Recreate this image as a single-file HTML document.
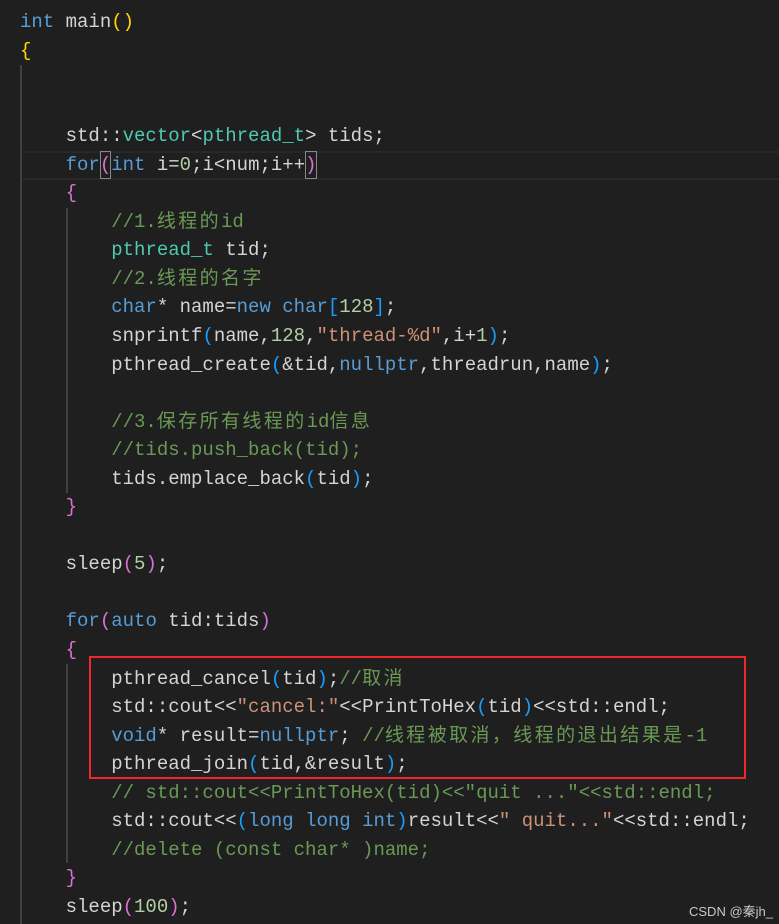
<!DOCTYPE html>
<html><head><meta charset="utf-8"><style>
html,body{margin:0;padding:0;background:#1f1f1f;width:779px;height:924px;overflow:hidden}
#c{position:absolute;left:20px;top:8px;font-family:"Liberation Mono","Noto Sans CJK SC",monospace;font-size:19px;color:#d4d4d4}
.l{height:28.55px;line-height:28.55px;white-space:pre}
.k{color:#569cd6}.t{color:#4ec9b0}.n{color:#b5cea8}.s{color:#ce9178}.c{color:#6a9955}
.g{color:#ffd700}.p{color:#da70d6}.b{color:#179fff}
.z{letter-spacing:2.4px}
.cur{position:absolute;left:22px;right:0;top:151px;height:25px;border-top:2px solid #282828;border-bottom:2px solid #282828}
.bx{display:inline-block;outline:1px solid #888;outline-offset:-1px}
.guide{position:absolute;width:2px;background:#404040}
#red{position:absolute;left:89px;top:656px;width:653px;height:119px;border:2px solid #f0262c}
#wm{position:absolute;right:6px;bottom:4px;font-family:"Liberation Sans","Noto Sans CJK SC",sans-serif;font-size:13px;color:#c8c8c8}
</style></head><body>
<div class="cur"></div>
<div class="guide" style="left:20px;top:65px;height:859px"></div>
<div class="guide" style="left:66px;top:208px;height:285px"></div>
<div class="guide" style="left:66px;top:664px;height:199px"></div>
<div id="c"><div class="l"><span class="k">int</span> main<span class="g">()</span></div><div class="l"><span class="g">{</span></div><div class="l"> </div><div class="l"> </div><div class="l">    std::<span class="t">vector</span>&lt;<span class="t">pthread_t</span>&gt; tids;</div><div class="l">    <span class="k">for</span><span class="p bx">(</span><span class="k">int</span> i=<span class="n">0</span>;i&lt;num;i++<span class="p bx">)</span></div><div class="l">    <span class="p">{</span></div><div class="l">        <span class="c">//1.<span class="z">线程的</span>id</span></div><div class="l">        <span class="t">pthread_t</span> tid;</div><div class="l">        <span class="c">//2.<span class="z">线程的名字</span></span></div><div class="l">        <span class="k">char</span>* name=<span class="k">new</span> <span class="k">char</span><span class="b">[</span><span class="n">128</span><span class="b">]</span>;</div><div class="l">        snprintf<span class="b">(</span>name,<span class="n">128</span>,<span class="s">"thread-%d"</span>,i+<span class="n">1</span><span class="b">)</span>;</div><div class="l">        pthread_create<span class="b">(</span>&amp;tid,<span class="k">nullptr</span>,threadrun,name<span class="b">)</span>;</div><div class="l"> </div><div class="l">        <span class="c">//3.<span class="z">保存所有线程的</span>id<span class="z">信息</span></span></div><div class="l">        <span class="c">//tids.push_back(tid);</span></div><div class="l">        tids.emplace_back<span class="b">(</span>tid<span class="b">)</span>;</div><div class="l">    <span class="p">}</span></div><div class="l"> </div><div class="l">    sleep<span class="p">(</span><span class="n">5</span><span class="p">)</span>;</div><div class="l"> </div><div class="l">    <span class="k">for</span><span class="p">(</span><span class="k">auto</span> tid:tids<span class="p">)</span></div><div class="l">    <span class="p">{</span></div><div class="l">        pthread_cancel<span class="b">(</span>tid<span class="b">)</span>;<span class="c">//<span class="z">取消</span></span></div><div class="l">        std::cout&lt;&lt;<span class="s">"cancel:"</span>&lt;&lt;PrintToHex<span class="b">(</span>tid<span class="b">)</span>&lt;&lt;std::endl;</div><div class="l">        <span class="k">void</span>* result=<span class="k">nullptr</span>; <span class="c">//<span class="z">线程被取消，线程的退出结果是</span>-1</span></div><div class="l">        pthread_join<span class="b">(</span>tid,&amp;result<span class="b">)</span>;</div><div class="l">        <span class="c">// std::cout&lt;&lt;PrintToHex(tid)&lt;&lt;"quit ..."&lt;&lt;std::endl;</span></div><div class="l">        std::cout&lt;&lt;<span class="b">(</span><span class="k">long</span> <span class="k">long</span> <span class="k">int</span><span class="b">)</span>result&lt;&lt;<span class="s">" quit..."</span>&lt;&lt;std::endl;</div><div class="l">        <span class="c">//delete (const char* )name;</span></div><div class="l">    <span class="p">}</span></div><div class="l">    sleep<span class="p">(</span><span class="n">100</span><span class="p">)</span>;</div></div>
<div id="red"></div>
<div id="wm">CSDN @秦jh_</div>
</body></html>
